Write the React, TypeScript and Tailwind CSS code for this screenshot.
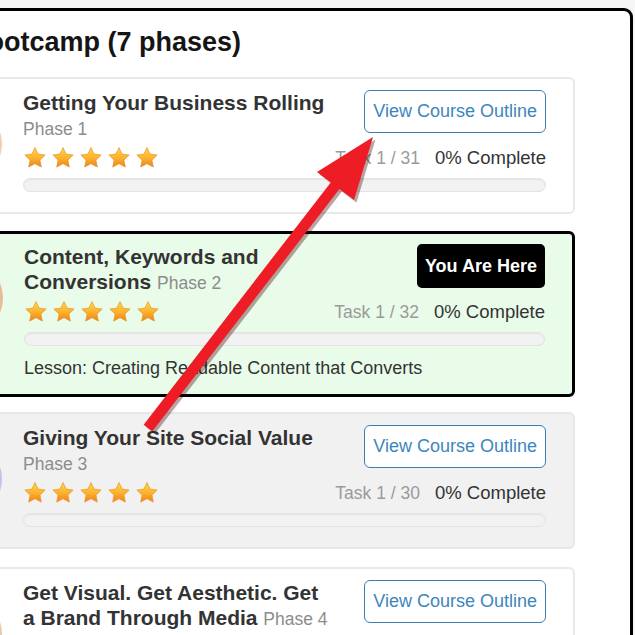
import React from "react";

const FONT = { fontFamily: '"Liberation Sans", Arial, Helvetica, sans-serif' };

function Star({ id }: { id: string }) {
  return (
    <svg width="24" height="24" viewBox="0 0 24 24">
      <defs>
        <linearGradient id={id} x1="0" y1="0" x2="0" y2="1">
          <stop offset="0" stopColor="#ffd84a" />
          <stop offset="0.55" stopColor="#fbb02e" />
          <stop offset="1" stopColor="#f0801c" />
        </linearGradient>
      </defs>
      <path
        d="M12 1.6l3.05 6.5 7.15.95-5.25 4.95 1.35 7.1L12 17.65 5.7 21.1l1.35-7.1L1.8 9.05l7.15-.95z"
        fill={`url(#${id})`}
        stroke="#e8951f"
        strokeWidth="0.7"
        strokeLinejoin="round"
      />
    </svg>
  );
}

function Stars({ k }: { k: string }) {
  return (
    <div className="flex gap-[4px]">
      {[0, 1, 2, 3, 4].map((i) => (
        <Star key={i} id={`g-${k}-${i}`} />
      ))}
    </div>
  );
}

type CardProps = {
  k: string;
  title: string;
  phase: string;
  task: string;
  variant: "white" | "current" | "gray";
  circle: string;
  lesson?: string;
  mt: string;
};

function Card({ k, title, phase, task, variant, circle, lesson, mt }: CardProps) {
  const box =
    variant === "current"
      ? "border-[3px] border-black bg-[#e9fbe9] pt-[10px] pb-[15px]"
      : variant === "gray"
      ? "border-2 border-[#e7e7e7] bg-[#f1f1f1] pt-[11px] pb-[20px]"
      : "border-2 border-[#e9e9e9] bg-white pt-[11px] pb-[20px]";
  return (
    <div className={`flex items-start rounded-[6px] pl-[14px] pr-[27px] ${box} ${mt}`}>
      <div
        className="mt-[15px] h-[78px] w-[86px] shrink-0 rounded-full"
        style={{ backgroundColor: circle }}
      />
      <div className="ml-[21px] flex-1">
        <div className="flex items-start justify-between">
          <div className="w-[308px] text-[21px] font-bold leading-[25px] text-[#333333]">
            {title}{" "}
            <span className="text-[17.5px] font-normal leading-[20px] text-[#8c8c8c]">{phase}</span>
          </div>
          {variant === "current" ? (
            <div className="flex h-[44px] items-center rounded-[5px] bg-black px-[8px] text-[18px] font-bold text-white">
              You Are Here
            </div>
          ) : (
            <div className="flex h-[43px] items-center rounded-[6px] border-[1.5px] border-[#3b7db3] bg-white px-[8px] text-[18px] text-[#3d86bc]">
              View Course Outline
            </div>
          )}
        </div>
        <div className="mt-[6px] flex h-[24px] items-center justify-between">
          <Stars k={k} />
          <div className="flex items-center gap-[15px] leading-[24px]">
            <span className="text-[17.5px] text-[#9a9a9a]">{task}</span>
            <span className="text-[18.5px] text-[#333333]">0% Complete</span>
          </div>
        </div>
        <div className="mt-[8px] h-[14px] rounded-full border border-[#e3e3e3] bg-[#f2f2f2] shadow-[inset_0_1px_2px_rgba(0,0,0,0.06)]" />
        {lesson && (
          <div className="mt-[11px] text-[18px] leading-[22px] text-[#333333]">{lesson}</div>
        )}
      </div>
    </div>
  );
}

export default function App() {
  return (
    <div className="relative h-[635px] w-[635px] overflow-hidden bg-[#f6f6f6] pt-[8px]" style={FONT}>
      <div className="ml-[-120px] h-[700px] w-[753px] rounded-tr-[9px] border-[3px] border-black bg-white pl-[17px] pr-[55px] pt-[15px]">
        <h1 className="ml-[68px] mb-[19px] text-[27px] font-bold leading-[32px] text-[#151515]">
          Bootcamp (7 phases)
        </h1>
        <Card
          k="a"
          title="Getting Your Business Rolling"
          phase="Phase 1"
          task="Task 1 / 31"
          variant="white"
          circle="#eecdb4"
          mt="mt-0"
        />
        <Card
          k="b"
          title="Content, Keywords and Conversions"
          phase="Phase 2"
          task="Task 1 / 32"
          variant="current"
          circle="#e9b99a"
          lesson="Lesson: Creating Readable Content that Converts"
          mt="mt-[17px]"
        />
        <Card
          k="c"
          title="Giving Your Site Social Value"
          phase="Phase 3"
          task="Task 1 / 30"
          variant="gray"
          circle="#cdbde6"
          mt="mt-[15px]"
        />
        <Card
          k="d"
          title="Get Visual. Get Aesthetic. Get a Brand Through Media"
          phase="Phase 4"
          task="Task 1 / 28"
          variant="white"
          circle="#e8c9b0"
          mt="mt-[18px]"
        />
      </div>
      <svg
        className="pointer-events-none absolute left-0 top-0"
        width="635"
        height="635"
        viewBox="0 0 635 635"
      >
        <g opacity="0.35" transform="translate(2.5 2.5)">
          <line x1="148" y1="428" x2="338" y2="182" stroke="#3a0000" strokeWidth="11" />
          <polygon points="373,137 354,200 317,172" fill="#3a0000" />
        </g>
        <line x1="148" y1="428" x2="338" y2="182" stroke="#ee1c24" strokeWidth="11" />
        <polygon points="373,137 354,200 317,172" fill="#ee1c24" />
      </svg>
    </div>
  );
}
